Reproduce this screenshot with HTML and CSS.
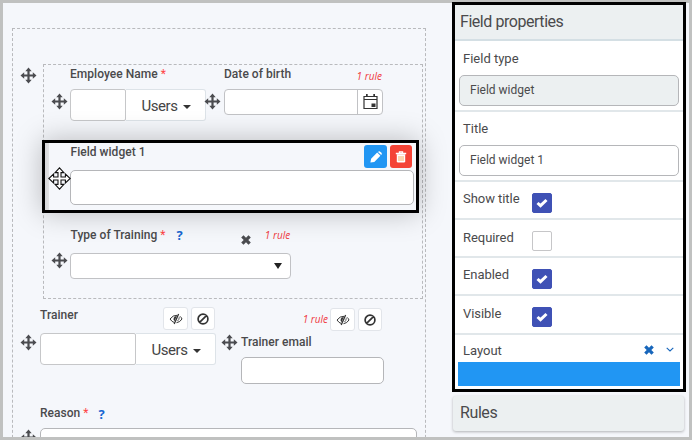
FILE: index.html
```html
<!DOCTYPE html>
<html lang="en">
<head>
<meta charset="utf-8">
<title>Form designer</title>
<link rel="stylesheet" href="styles.css">
</head>
<body>
<svg class="defs" aria-hidden="true">
  <symbol id="move" viewBox="0 0 17 17"><path d="M8.5.5l3.2 3.7H9.6v3.2h3.2V5.3l3.7 3.2-3.7 3.2V9.6H9.6v3.2h2.1l-3.2 3.7-3.2-3.7h2.1V9.6H4.2v2.1L.5 8.5l3.7-3.2v2.1h3.2V4.2H5.3z"/></symbol>
  <symbol id="cross" viewBox="0 0 10 10"><path d="M2.500.2L5 2.700 7.500.2 9.800 2.500 7.300 5l2.500 2.500-2.300 2.300L5 7.300 2.500 9.800.2 7.500 2.700 5 .2 2.500z"/></symbol>
  <symbol id="hidden" viewBox="0 0 14 12"><path d="M1 6Q4 2 8 2.300M1 6Q3 9 5.300 9.500M11 3.300Q12.500 4.500 13 6 11 9.300 7.500 9.700" fill="none" stroke="currentColor" stroke-width="1"/><path d="M7.800 3A3 3 0 0 0 5.500 8.200z"/><path d="M9.600 1L5.200 11" fill="none" stroke="currentColor" stroke-width="1.300"/><path d="M10.300 4.200Q10.200 6.800 8.500 8" fill="none" stroke="currentColor" stroke-width=".8"/></symbol>
  <symbol id="ban" viewBox="0 0 12 12"><path d="M2.600 9.400L9.400 2.600M6 1.100a4.900 4.900 0 1 1 0 9.800a4.900 4.900 0 0 1 0-9.800z" fill="none" stroke="currentColor" stroke-width="1.700"/></symbol>
  <symbol id="check" viewBox="0 0 12 10"><path d="M1.500 5l3 2.700L10.500 2" fill="none" stroke="#fff" stroke-width="3"/></symbol>
</svg>
<div class="frame">
  <main class="canvas">
    <section class="form">
      <div class="group-row">
        <svg class="move"><use href="#move"/></svg>
        <div class="group">
          <div class="row row-person">
            <svg class="move"><use href="#move"/></svg>
            <div class="field employee">
              <div class="label">Employee Name <span class="req">*</span></div>
              <div class="picker"><div class="input"></div><div class="users">Users<i class="caret"></i></div></div>
            </div>
            <svg class="move"><use href="#move"/></svg>
            <div class="field birth">
              <div class="label">Date of birth<span class="rule">1 rule</span></div>
              <div class="date">
                <div class="date-text"></div>
                <div class="date-button"><svg class="calendar" viewBox="0 0 15 15"><path d="M1 2.500h13v12H1zM1 5.500h13" fill="none" stroke="#333" stroke-width="1.200"/><path d="M3 0h1.700v3H3zM10.300 0H12v3h-1.700zM8.500 9.500h4V13h-4z" fill="#333"/></svg></div>
              </div>
            </div>
          </div>
          <div class="selected">
            <svg class="cursor" viewBox="0 0 23 23"><path d="M11.500.8l4.400 4.800H13v4.400h4.400V7.100l4.800 4.400-4.800 4.400V13H13v4.400h2.900l-4.400 4.800-4.400-4.800H10V13H5.600v2.900L.8 11.500l4.800-4.400V10H10V5.600H7.100z" fill="#fff" stroke="#111" stroke-width="1.100"/><path d="M11.500 5v13M5 11.500h13" stroke="#fff" stroke-width="1"/></svg>
            <div class="widget">
              <div class="widget-head">
                <div class="label">Field widget 1</div>
                <div class="tools">
                  <span class="tool edit"><svg viewBox="0 0 12 12"><path d="M.4 11.600l.7-3.900L7.200 1.600l3.200 3.200-6.100 6.100zM8 .9q1.200-1.300 2.500 0l.7.7q1.200 1.200 0 2.500z" fill="#fff"/></svg></span>
                  <span class="tool delete"><svg viewBox="0 0 12 12"><path d="M4.500 2V.9h3V2M.8 2.500h10.400" fill="none" stroke="#fff" stroke-width="1.400"/><path d="M1.800 3.200h8.400v7q0 1.300-1.300 1.300H3.100q-1.300 0-1.300-1.300z" fill="#fff"/><path d="M4 5v5M6 5v5M8 5v5" stroke="#f89a3c" stroke-width=".8"/></svg></span>
                </div>
              </div>
              <div class="input"></div>
            </div>
          </div>
          <div class="row row-training">
            <svg class="move"><use href="#move"/></svg>
            <div class="field training">
              <div class="label">Type of Training <span class="req">*</span><span class="help">?</span><svg class="clear"><use href="#cross"/></svg><span class="rule">1 rule</span></div>
              <div class="select"><i class="arrow"></i></div>
            </div>
          </div>
        </div>
      </div>
      <div class="row row-trainer">
        <svg class="move"><use href="#move"/></svg>
        <div class="field trainer">
          <div class="trainer-head"><div class="label">Trainer</div><div class="states"><span><svg class="eye"><use href="#hidden"/></svg></span><span><svg class="ban"><use href="#ban"/></svg></span></div></div>
          <div class="picker"><div class="input"></div><div class="users">Users<i class="caret"></i></div></div>
        </div>
        <svg class="move"><use href="#move"/></svg>
        <div class="field email">
          <div class="states"><span class="rule">1 rule</span><span><svg class="eye"><use href="#hidden"/></svg></span><span><svg class="ban"><use href="#ban"/></svg></span></div>
          <div class="label">Trainer email</div>
          <div class="input"></div>
        </div>
      </div>
      <div class="row row-reason">
        <svg class="move"><use href="#move"/></svg>
        <div class="field reason">
          <div class="label">Reason <span class="req">*</span><span class="help">?</span></div>
          <div class="input"></div>
        </div>
      </div>
    </section>
  </main>
  <aside class="side">
    <section class="properties">
      <h2>Field properties</h2>
      <div class="prop text-prop type-prop"><div class="name">Field type</div><div class="value readonly">Field widget</div></div>
      <div class="prop text-prop"><div class="name">Title</div><div class="value">Field widget 1</div></div>
      <div class="prop flag"><span>Show title</span><i class="box on"><svg><use href="#check"/></svg></i></div>
      <div class="prop flag required"><span>Required</span><i class="box"></i></div>
      <div class="prop flag"><span>Enabled</span><i class="box on"><svg><use href="#check"/></svg></i></div>
      <div class="prop flag visible"><span>Visible</span><i class="box on"><svg><use href="#check"/></svg></i></div>
      <div class="layout"><span>Layout</span><svg class="remove"><use href="#cross"/></svg><svg class="chevron" viewBox="0 0 8 5"><path d="M.7.8L4 4 7.300.8" fill="none" stroke="currentColor" stroke-width="1.100"/></svg></div>
      <div class="swatch"></div>
    </section>
    <section class="rules">Rules</section>
  </aside>
</div>
</body>
</html>
```
FILE: styles.css
```css
* { box-sizing: border-box; }
body { margin: 0; font-family: Roboto, "Liberation Sans", sans-serif; color: #4a4a4c; }
svg { display: block; flex: none; }
.defs { position: absolute; width: 0; height: 0; }
.frame { width: 692px; height: 440px; border: 3px solid #c0c1c0; background: #f5f7fb; display: flex; }
.canvas { width: 449px; height: 434px; padding: 25px 0 0 9px; overflow: hidden; flex: none; }
.form { width: 414px; height: 430px; border: 1px dashed #b9babd; padding-top: 35px; }
.move { width: 17px; height: 17px; fill: #4b4c50; }
.label { font-size: 12px; line-height: 16px; font-weight: 500; white-space: nowrap; letter-spacing: .03px; }
.req { color: #f44; font-weight: 400; }
.rule { font: italic 10px/14px "Open Sans", sans-serif; color: #f0393e; white-space: nowrap; }
.help { font: bold 13px/16px "Open Sans", sans-serif; color: #1766d1; }
.input { background: #fff; border: 1px solid #b5b6b9; border-radius: 5px; }

.group-row { display: flex; height: 235px; }
.group-row > .move { margin: 3px 6px 0 7px; }
.group { width: 380px; height: 235px; border: 1px dashed #b9babd; flex: none; }
.row { display: flex; align-items: flex-start; }
.row-person { height: 75px; padding-left: 6.500px; }
.row-person > .move { margin-top: 28px; }
.employee { width: 136px; margin-left: 2.500px; flex: none; }
.employee .label, .birth .label { height: 24px; padding-top: 1px; }
.picker { display: flex; height: 32px; }
.picker .input { flex: 1; border-radius: 4px 2px 2px 4px; border-color: #c6c7c9; }
.users { width: 80px; display: flex; align-items: center; justify-content: center; gap: 5px; padding: 2px 0 0 1px; background: #fff; border: 1px solid #dde3e8; border-left: 0; border-radius: 0 3px 3px 0; font-size: 15px; letter-spacing: -.45px; color: #444; }
.caret { border: 4px solid transparent; border-top-color: #333; border-bottom: 0; margin-top: 1px; }
.row-person > .move + .field + .move { margin-left: -2px; }
.birth { width: 159px; margin-left: 3px; }
.birth .label { display: flex; justify-content: space-between; }
.birth .rule { margin: 3px 1px 0 0; }
.date { display: flex; height: 26px; background: #fff; border: 1px solid #c1c2c5; border-radius: 4px; }
.date-text { width: 133px; border-right: 1px solid #c1c2c5; }
.date-button { flex: 1; display: flex; align-items: flex-start; justify-content: center; padding-top: 4px; }
.calendar { width: 15px; height: 15px; }

.selected { position: relative; z-index: 1; width: 377px; height: 73px; margin-left: -2px; border: 3px solid #000; background: linear-gradient(90deg, #d6d7da 0, #e0e1e3 4px, #f5f7fb 4px); display: flex; box-shadow: 0 0 28px rgba(0, 0, 0, .25); }
.cursor { width: 23px; height: 23px; margin: 24px 0 0 3px; position: relative; z-index: 1; }
.widget { width: 344px; margin-left: -1px; padding-top: 2px; }
.widget-head { height: 25px; display: flex; justify-content: space-between; }
.widget-head .label { margin-top: -1px; padding-left: .5px; }
.widget .input { height: 35px; }
.tools { display: flex; gap: 3px; padding-right: 2px; }
.tool { width: 23px; height: 23px; border-radius: 3px; display: flex; align-items: center; justify-content: center; }
.tool svg { width: 12px; height: 12px; }
.delete { width: 22px; background: #f44336; }
.edit { background: #2196f3; }

.row-training { padding: 13px 0 0 6.500px; }
.row-training > .move { margin-top: 26px; }
.training { width: 221px; margin-left: 2.500px; }
.training .label { display: flex; height: 27px; padding: 1px 0 0 .5px; }
.training .req { margin-left: 3px; }
.training .help { margin-left: 11px; }
.clear { width: 10px; height: 10px; fill: #4b4c50; margin: 8px 0 0 58px; }
.training .rule { margin: 1px 0 0 14px; }
.select { height: 26px; background: #fff; border: 1px solid #c1c2c5; border-radius: 4px; display: flex; align-items: center; justify-content: flex-end; padding-right: 8px; }
.arrow { border: 4px solid transparent; border-top: 6px solid #222; border-bottom: 0; }

.row-trainer { height: 102px; padding-left: 7px; }
.row-trainer > .move { margin-top: 35px; }
.trainer { width: 176px; margin-left: 3px; }
.trainer-head { height: 34px; display: flex; justify-content: space-between; padding: 8px 2px 0 0; }
.trainer-head .states { margin-right: -1px; }
.states { display: flex; gap: 3px; }
.states span:not(.rule) { width: 25px; height: 23px; background: #fff; border: 1px solid #e2e5ea; border-radius: 3px; display: flex; align-items: center; justify-content: center; }
.states span:last-child { width: 24px; }
.states .rule { margin-right: -1px; }
.eye { width: 14px; height: 12px; fill: #333; color: #333; }
.ban { width: 12px; height: 12px; color: #333; }
.trainer + .move { margin-left: 5px; }
.email { width: 143px; margin-left: 3px; padding-top: 9px; }
.email .states { justify-content: flex-end; height: 26px; padding-right: 2px; }
.email .rule { margin-top: 4px; }
.email .label { height: 23px; }
.email .input { height: 27px; }
.row-reason { padding-left: 7px; }
.row-reason > .move { margin-top: 28px; }
.reason { width: 377px; margin-left: 3px; flex: none; }
.reason .label { display: flex; height: 27px; padding-top: 4px; }
.reason .req { margin-left: 3px; }
.reason .help { margin: 1px 0 0 10px; }
.reason .input { height: 35px; }

.side { width: 235px; flex: none; margin-top: -1px; }
.properties { width: 234px; height: 390px; border: 3px solid #000; background: #fff; font-size: 13px; line-height: 16px; }
h2 { margin: 0; height: 36px; padding: 2px 5px 0; background: #ecf0f1; border-bottom: 2px solid #d4dfe4; font-size: 16px; line-height: 30px; font-weight: 400; letter-spacing: -.45px; }
.prop { border-bottom: 2px solid #e1e7ea; }
.text-prop { height: 70px; padding: 9px 4px 0; }
.type-prop { height: 71px; padding-top: 10px; }
.name { padding-left: 4px; height: 24px; }
.value { height: 31px; border: 1px solid #b5b6b9; border-radius: 5px; padding: 6px 10px; font-size: 12px; }
.readonly { background: #ecf0f1; }
.flag { height: 38px; padding: 9px 8px 0; display: flex; }
.flag span { width: 69px; letter-spacing: -.05px; }
.required span { padding-top: 1px; }
.box { width: 20px; height: 20px; margin-top: 2px; border: 1px solid #c6c6c8; border-radius: 2px; display: flex; align-items: center; justify-content: center; }
.on { background: #3f51b5; border-color: #3f51b5; }
.box svg { width: 12px; height: 10px; }
.visible { height: 39px; }
.visible span { padding-top: 1px; }
.layout { height: 27px; padding: 8px 9px 0 8px; display: flex; }
.layout span { flex: 1; }
.remove { width: 10px; height: 10px; margin: 2px 12px 0 0; fill: #1766bb; }
.chevron { width: 8px; height: 5px; margin-top: 4px; color: #1766bb; }
.swatch { height: 24px; margin: 0 3px; background: #2196f3; }
.rules { width: 231px; height: 35px; margin: 4px 0 0 1px; padding: 0 7px; background: #ecf0f1; border-radius: 3px; box-shadow: 0 1px 3px rgba(0, 0, 0, .28); font-size: 16px; line-height: 34px; letter-spacing: -.4px; }
```
